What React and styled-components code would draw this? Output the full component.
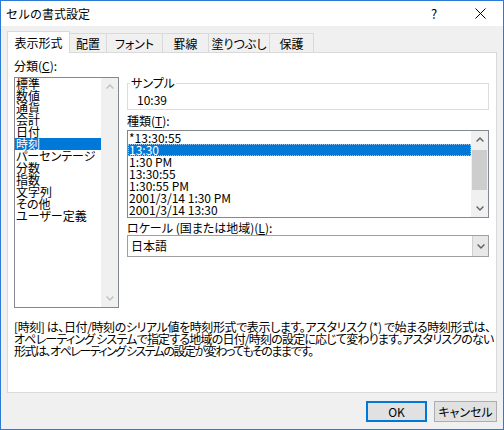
import React from 'react';
import styled, { createGlobalStyle } from 'styled-components';

const Global = createGlobalStyle`
  html, body { margin: 0; padding: 0; background: #f0f0f0; }
  body {
    font-family: "Noto Sans CJK JP", "Noto Sans", sans-serif;
    font-size: 12px;
    color: #000;
  }
  * { box-sizing: border-box; }
`;

const Window = styled.div`
  width: 504px;
  height: 430px;
  border: 1px solid #2b7bd4;
  background: #f0f0f0;
  display: flex;
  flex-direction: column;
  overflow: hidden;
`;

const TitleBar = styled.div`
  height: 25px;
  background: #fff;
  display: flex;
  align-items: center;
`;

const Title = styled.div`
  flex: 1;
  padding-left: 5px;
  font-size: 12px;
  line-height: 14px;
`;

const CaptionButton = styled.div`
  width: 46px;
  height: 25px;
  display: flex;
  align-items: center;
  justify-content: center;
  font-size: 13px;
  line-height: 14px;
`;

const Body = styled.div`
  flex: 1;
  display: flex;
  flex-direction: column;
  padding: 5px 6px 7px 6px;
`;

const TabStrip = styled.div`
  height: 21px;
  display: flex;
  align-items: flex-end;
`;

const Tab = styled.div`
  width: ${p => p.$w}px;
  height: ${p => (p.$active ? 22 : 19)}px;
  margin-bottom: ${p => (p.$active ? -1 : 0)}px;
  margin-left: ${p => (p.$first ? 0 : -1)}px;
  border: 1px solid #d9d9d9;
  border-bottom: none;
  background: ${p => (p.$active ? '#fff' : '#f0f0f0')};
  display: flex;
  align-items: center;
  justify-content: center;
  line-height: 14px;
  padding-top: ${p => (p.$active ? 0 : 1)}px;
  position: relative;
  z-index: ${p => (p.$active ? 1 : 0)};
  font-feature-settings: "palt";
`;

const Panel = styled.div`
  height: 341px;
  border: 1px solid #d9d9d9;
  background: #fff;
  padding: 6px 7px 0 6px;
  display: flex;
  flex-direction: column;
`;

const Columns = styled.div`
  display: grid;
  grid-template-columns: 105px 362px;
  column-gap: 8px;
  align-items: start;
`;

const Column = styled.div`
  display: flex;
  flex-direction: column;
  padding-top: ${p => p.$top || 0}px;
`;

const Label = styled.div`
  line-height: 14px;
  height: 14px;
  margin-top: ${p => p.$mt || 0}px;
  margin-bottom: ${p => p.$mb || 0}px;
  white-space: nowrap;
  font-feature-settings: "palt";
`;

const ListBox = styled.div`
  height: ${p => p.$h}px;
  border: 1px solid #828790;
  background: #fff;
  display: flex;
`;

const Items = styled.div`
  flex: 1;
  padding-top: ${p => p.$pt || 0}px;
  min-width: 0;
`;

const Item = styled.div`
  height: 12px;
  line-height: 12px;
  padding-left: 1px;
  white-space: nowrap;
  font-size: 12px;
  font-feature-settings: "palt";
  background: ${p => (p.$selected ? '#0078d7' : 'transparent')};
  color: ${p => (p.$selected ? '#fff' : '#000')};
  outline: ${p => (p.$focus ? '1px dotted #9cc3ea' : 'none')};
  outline-offset: -1px;
`;

const ScrollBar = styled.div`
  width: 17px;
  background: #f0f0f0;
  display: flex;
  flex-direction: column;
`;

const ArrowBox = styled.div`
  width: 17px;
  height: 17px;
  display: flex;
  align-items: center;
  justify-content: center;
`;

const Track = styled.div`
  flex: 1;
  padding: 2px 1px 0 1px;
`;

const Thumb = styled.div`
  height: 40px;
  background: #cdcdcd;
`;

const Group = styled.fieldset`
  margin: 0;
  padding: 0 2px 3px 2px;
  border: 1px solid #dcdcdc;
  min-width: 0;
`;

const Legend = styled.legend`
  padding: 0 1px;
  line-height: 14px;
  font-size: 12px;
  font-feature-settings: "palt";
`;

const SampleValue = styled.div`
  line-height: 12px;
  padding: 4px 0 0 7px;
`;

const Combo = styled.div`
  height: 22px;
  border: 1px solid #a0a0a0;
  background: #fff;
  display: flex;
`;

const ComboText = styled.div`
  flex: 1;
  line-height: 20px;
  padding-left: 3px;
`;

const DropButton = styled.div`
  width: 16px;
  background: #e8e8e8;
  border-left: 1px solid #d0d0d0;
  display: flex;
  align-items: center;
  justify-content: center;
`;

const Description = styled.div`
  margin-top: 13px;
  line-height: 12px;
  font-feature-settings: "palt";
`;

const DescLine = styled.div`
  white-space: nowrap;
  height: 12px;
  letter-spacing: ${p => p.$track}px;
`;

const ButtonRow = styled.div`
  margin-top: 8px;
  display: flex;
  justify-content: flex-end;
  gap: 7px;
`;

const Button = styled.div`
  width: ${p => p.$w}px;
  height: 21px;
  border: ${p => (p.$default ? '2px solid #0078d7' : '1px solid #adadad')};
  background: #e1e1e1;
  display: flex;
  align-items: center;
  justify-content: center;
  line-height: 14px;
  font-feature-settings: "palt";
`;

const Chevron = ({ up, color }) => (
  <svg width="8" height="5" viewBox="0 0 8 5">
    <path
      d={up ? 'M0.6 4.4 L4 1 L7.4 4.4' : 'M0.6 0.6 L4 4 L7.4 0.6'}
      fill="none"
      stroke={color}
      strokeWidth="1.4"
    />
  </svg>
);

const CloseIcon = () => (
  <svg width="11" height="11" viewBox="0 0 11 11">
    <path d="M0.5 0.5 L10.5 10.5 M10.5 0.5 L0.5 10.5" stroke="#000" strokeWidth="1" fill="none" />
  </svg>
);

const tabs = [
  ['表示形式', 63],
  ['配置', 38],
  ['フォント', 57],
  ['罫線', 47],
  ['塗りつぶし', 62],
  ['保護', 45],
];

const categories = [
  '標準', '数値', '通貨', '会計', '日付', '時刻', 'パーセンテージ',
  '分数', '指数', '文字列', 'その他', 'ユーザー定義',
];

const types = [
  '*13:30:55', '13:30', '1:30 PM', '13:30:55', '1:30:55 PM',
  '2001/3/14 1:30 PM', '2001/3/14 13:30',
];

const description = [
  ['[時刻] は、日付/時刻のシリアル値を時刻形式で表示します。アスタリスク (*) で始まる時刻形式は、', -0.4],
  ['オペレーティング システムで指定する地域の日付/時刻の設定に応じて変わります。アスタリスクのない', -0.8],
  ['形式は、オペレーティング システムの設定が変わってもそのままです。', -1.5],
];

export default function App() {
  return (
    <>
      <Global />
      <Window>
        <TitleBar>
          <Title>セルの書式設定</Title>
          <CaptionButton>?</CaptionButton>
          <CaptionButton><CloseIcon /></CaptionButton>
        </TitleBar>
        <Body>
          <TabStrip>
            {tabs.map(([t, w], i) => (
              <Tab key={t} $w={w} $first={i === 0} $active={i === 0}>{t}</Tab>
            ))}
          </TabStrip>
          <Panel>
            <Columns>
              <Column>
                <Label $mb={4}>分類(<u>C</u>):</Label>
                <ListBox $h={231}>
                  <Items>
                    {categories.map(c => (
                      <Item key={c} $selected={c === '時刻'}>{c}</Item>
                    ))}
                  </Items>
                  <ScrollBar>
                    <ArrowBox><Chevron up color="#c0c0c0" /></ArrowBox>
                    <Track />
                    <ArrowBox><Chevron color="#c0c0c0" /></ArrowBox>
                  </ScrollBar>
                </ListBox>
              </Column>
              <Column $top={17}>
                <Group>
                  <Legend>サンプル</Legend>
                  <SampleValue>10:39</SampleValue>
                </Group>
                <Label $mt={4} $mb={2}>種類(<u>T</u>):</Label>
                <ListBox $h={88}>
                  <Items $pt={1}>
                    {types.map((t, i) => (
                      <Item key={i} $selected={i === 1} $focus={i === 1}>{t}</Item>
                    ))}
                  </Items>
                  <ScrollBar>
                    <ArrowBox><Chevron up color="#606060" /></ArrowBox>
                    <Track><Thumb /></Track>
                    <ArrowBox><Chevron color="#606060" /></ArrowBox>
                  </ScrollBar>
                </ListBox>
                <Label $mt={3}>ロケール (国または地域)(<u>L</u>):</Label>
                <Combo>
                  <ComboText>日本語</ComboText>
                  <DropButton><Chevron color="#606060" /></DropButton>
                </Combo>
              </Column>
            </Columns>
            <Description>
              {description.map(([text, track], i) => (
                <DescLine key={i} $track={track}>{text}</DescLine>
              ))}
            </Description>
          </Panel>
          <ButtonRow>
            <Button $w={61} $default>OK</Button>
            <Button $w={63}>キャンセル</Button>
          </ButtonRow>
        </Body>
      </Window>
    </>
  );
}
